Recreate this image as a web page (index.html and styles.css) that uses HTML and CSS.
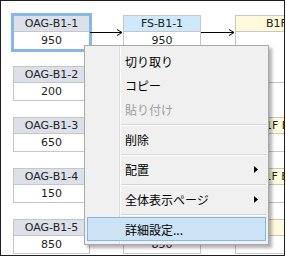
FILE: index.html
```html
<!DOCTYPE html>
<html lang="ja">
<head>
  <meta charset="UTF-8" />
  <title>Layout</title>
  <link rel="stylesheet" href="styles.css">
</head>
<body>
  <div class="canvas">
    <div class="diagram">
      <div class="col">
        <div class="node is-selected"><div class="node-name">OAG-B1-1</div><div class="node-value">950</div></div>
        <div class="node"><div class="node-name">OAG-B1-2</div><div class="node-value">200</div></div>
        <div class="node"><div class="node-name">OAG-B1-3</div><div class="node-value">650</div></div>
        <div class="node"><div class="node-name">OAG-B1-4</div><div class="node-value">150</div></div>
        <div class="node"><div class="node-name">OAG-B1-5</div><div class="node-value">850</div></div>
      </div>

      <div class="link">
        <svg width="33" height="9" viewBox="0 0 33 9">
          <path d="M0 4.5H32" stroke="#000" />
          <path d="M27 1.5L32 4.5L27 7.5" fill="none" stroke="#000" />
        </svg>
      </div>

      <div class="col col-fs">
        <div class="node"><div class="node-name">FS-B1-1</div><div class="node-value">950</div></div>
        <div class="node"><div class="node-name">FS-B1-2</div><div class="node-value">200</div></div>
        <div class="node"><div class="node-name">FS-B1-3</div><div class="node-value">650</div></div>
        <div class="node"><div class="node-name">FS-B1-4</div><div class="node-value">150</div></div>
        <div class="node"><div class="node-name">FS-B1-5</div><div class="node-value">850</div></div>
      </div>

      <div class="link link-wide">
        <svg width="34" height="9" viewBox="0 0 34 9">
          <path d="M0 4.5H33" stroke="#000" />
          <path d="M28 1.5L33 4.5L28 7.5" fill="none" stroke="#000" />
        </svg>
      </div>

      <div class="col col-floor">
        <div class="node node-tall"><div class="node-name">B1F-B1-1</div></div>
        <div class="node node-gap"><div class="node-name">B1F EV-B1-3</div></div>
        <div class="node"><div class="node-name">B1F BR-B1-4</div></div>
        <div class="node"><div class="node-name">B5</div></div>
      </div>
    </div>

    <!-- context menu -->
    <div class="menu">
      <div class="menu-item">切り取り</div>
      <div class="menu-item">コピー</div>
      <div class="menu-item is-disabled">貼り付け</div>
      <div class="menu-sep"></div>
      <div class="menu-item">削除</div>
      <div class="menu-sep"></div>
      <div class="menu-item">配置
        <svg class="menu-arrow" width="4" height="7" viewBox="0 0 4 7"><path d="M0 0L4 3.5L0 7Z" fill="#000" /></svg>
      </div>
      <div class="menu-sep"></div>
      <div class="menu-item">全体表示ページ
        <svg class="menu-arrow" width="4" height="7" viewBox="0 0 4 7"><path d="M0 0L4 3.5L0 7Z" fill="#000" /></svg>
      </div>
      <div class="menu-sep"></div>
      <div class="menu-item is-active">詳細設定...</div>
    </div>
  </div>
</body>
</html>
```

FILE: styles.css
```css
* {
  box-sizing: border-box;
}

body {
  margin: 0;
  background: #fff;
  font-family: "DejaVu Sans", sans-serif;
}

.canvas {
  position: relative;
  width: 285px;
  height: 256px;
  border: 1px solid #1f1f1f;
  overflow: hidden;
}

.diagram {
  display: flex;
  align-items: flex-start;
  padding: 14px 0 0 12px;
}

.col {
  display: flex;
  flex-direction: column;
  gap: 16px;
  flex: none;
  width: 77px;
}

.col-fs {
  width: 78px;
}

.col-floor {
  width: 112px;
}

.node {
  height: 35px;
  border: 1px solid #c6c6c6;
  background: #fff;
  font-size: 11px;
  color: #222;
  text-align: center;
  white-space: nowrap;
}

.node-name {
  height: 16px;
  line-height: 15px;
  border-bottom: 1px solid #c6c6c6;
  background: #dbe0e9;
}

.node-value {
  line-height: 17px;
}

.col-fs .node-name {
  background: #cfe8fb;
}

.col-floor .node-name {
  background: #fffadb;
}

.node-tall {
  height: 68px;
}

.node-gap {
  margin-top: 18px;
}

.is-selected {
  outline: 3px solid #86b7e7;
  outline-offset: -1px;
}

.link {
  flex: none;
  width: 33px;
  margin-top: 13px;
}

.link-wide {
  width: 34px;
}

.link svg {
  display: block;
}

.menu {
  position: absolute;
  left: 83px;
  top: 44px;
  width: 185px;
  padding: 3px 2px;
  border: 1px solid #a9a9a9;
  background:
    linear-gradient(90deg, transparent 34px, #dcdcdc 34px, #dcdcdc 35px, #fff 35px, #fff 36px, transparent 36px),
    #f0f0f0;
  box-shadow: 3px 3px 3px rgba(0, 0, 0, 0.3);
  font-family: "Noto Sans CJK JP", sans-serif;
  font-size: 12px;
  color: #000;
}

.menu-item {
  display: flex;
  align-items: center;
  height: 24px;
  padding: 0 7px 0 37px;
  border: 1px solid transparent;
  white-space: nowrap;
}

.menu-item.is-disabled {
  color: #9d9d9d;
}

.menu-item.is-active {
  background: #cbe3f4;
  border-color: #84b9e2;
}

.menu-arrow {
  margin-left: auto;
  display: block;
}

.menu-sep {
  margin: 3px 0 1px 34px;
  border-top: 1px solid #d5d5d5;
  border-bottom: 1px solid #fff;
}
```
